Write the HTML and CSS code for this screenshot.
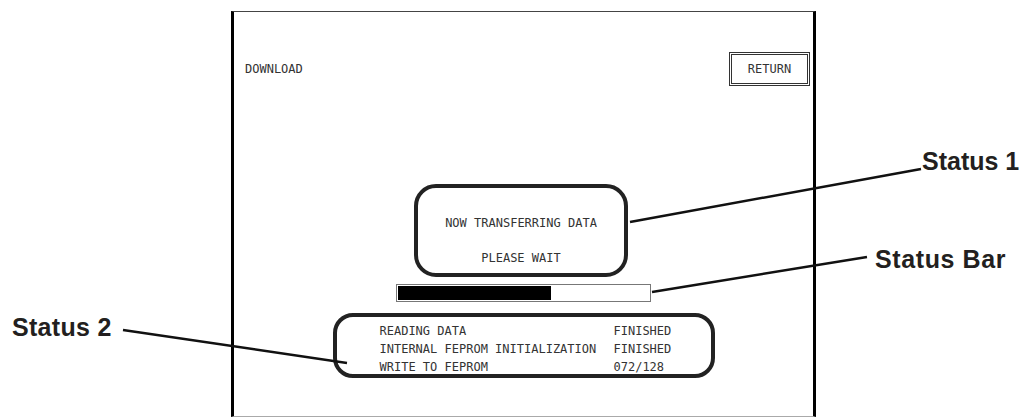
FILE: index.html
```html
<!DOCTYPE html>
<html lang="en">
<head>
    <meta charset="UTF-8">
    <meta name="viewport" content="width=device-width, initial-scale=1.0">
    <title>Download Screen</title>
    <link rel="stylesheet" href="styles.css">
</head>
<body>
    <div class="page">
        <div class="screen">
            <div class="screen-head">
                <span class="title">DOWNLOAD</span>
                <button class="return-btn">RETURN</button>
            </div>
            <div class="screen-body">
                <div class="status1">
                    <div>NOW TRANSFERRING DATA</div>
                    <div class="wait">PLEASE WAIT</div>
                </div>
                <div class="bar"><div class="bar-fill" style="width: 61%"></div></div>
                <div class="status2">
                    <span>READING DATA</span><span>FINISHED</span>
                    <span>INTERNAL FEPROM INITIALIZATION</span><span>FINISHED</span>
                    <span>WRITE TO FEPROM</span><span>072/128</span>
                </div>
            </div>
        </div>

        <!-- callouts -->
        <div class="callout c1">Status 1</div>
        <div class="callout c2">Status Bar</div>
        <div class="callout c3">Status 2</div>
        <svg class="leaders" width="1024" height="417" viewBox="0 0 1024 417">
            <line x1="630" y1="222" x2="921" y2="169" />
            <line x1="652" y1="292" x2="867" y2="257" />
            <line x1="123" y1="330" x2="347" y2="363" />
        </svg>
    </div>
</body>
</html>
```

FILE: styles.css
```css
body { margin: 0; background: #fff; }
.page { position: relative; width: 1024px; height: 417px; overflow: hidden; }

.screen { box-sizing: border-box; width: 585px; height: 406px; margin: 11px 0 0 231px; border-left: 3px solid #000; border-right: 3px solid #000; border-top: 1px solid #444; border-bottom: 1px solid #aaa; font-family: "DejaVu Sans Mono", monospace; font-size: 12px; color: #333; }
.screen-head { display: flex; justify-content: space-between; align-items: center; padding: 40px 3px 0 11px; }
.return-btn { position: relative; box-sizing: border-box; width: 81px; height: 34px; padding: 0; background: #fff; border: 3px double #333; font: inherit; color: #333; }

.screen-body { display: flex; flex-direction: column; align-items: center; }
.status1 { box-sizing: border-box; width: 214px; height: 93px; margin: 98px 5px 0 0; padding-top: 28px; border: 4px solid #222; border-radius: 22px; text-align: center; line-height: 14px; }
.status1 .wait { margin-top: 21px; }

.bar { box-sizing: border-box; width: 255px; height: 18px; margin-top: 7px; padding: 1px; border: 1px solid #777; }
.bar-fill { height: 100%; background: #000; }

.status2 { box-sizing: border-box; display: grid; grid-template-columns: 234px auto; width: 382px; height: 65px; margin-top: 11px; padding: 5px 0 0 43px; border: 4px solid #222; border-radius: 20px; line-height: 18px; }

.callout { position: absolute; font-family: "Liberation Sans", Arial, sans-serif; font-weight: bold; font-size: 25px; line-height: 25px; color: #231f20; }
.c1 { left: 922px; top: 149px; }
.c2 { left: 875px; top: 247px; letter-spacing: 0.6px; }
.c3 { left: 12px; top: 315px; letter-spacing: 0.3px; }
.leaders { position: absolute; left: 0; top: 0; }
.leaders line { stroke: #111; stroke-width: 2.5; }
```
